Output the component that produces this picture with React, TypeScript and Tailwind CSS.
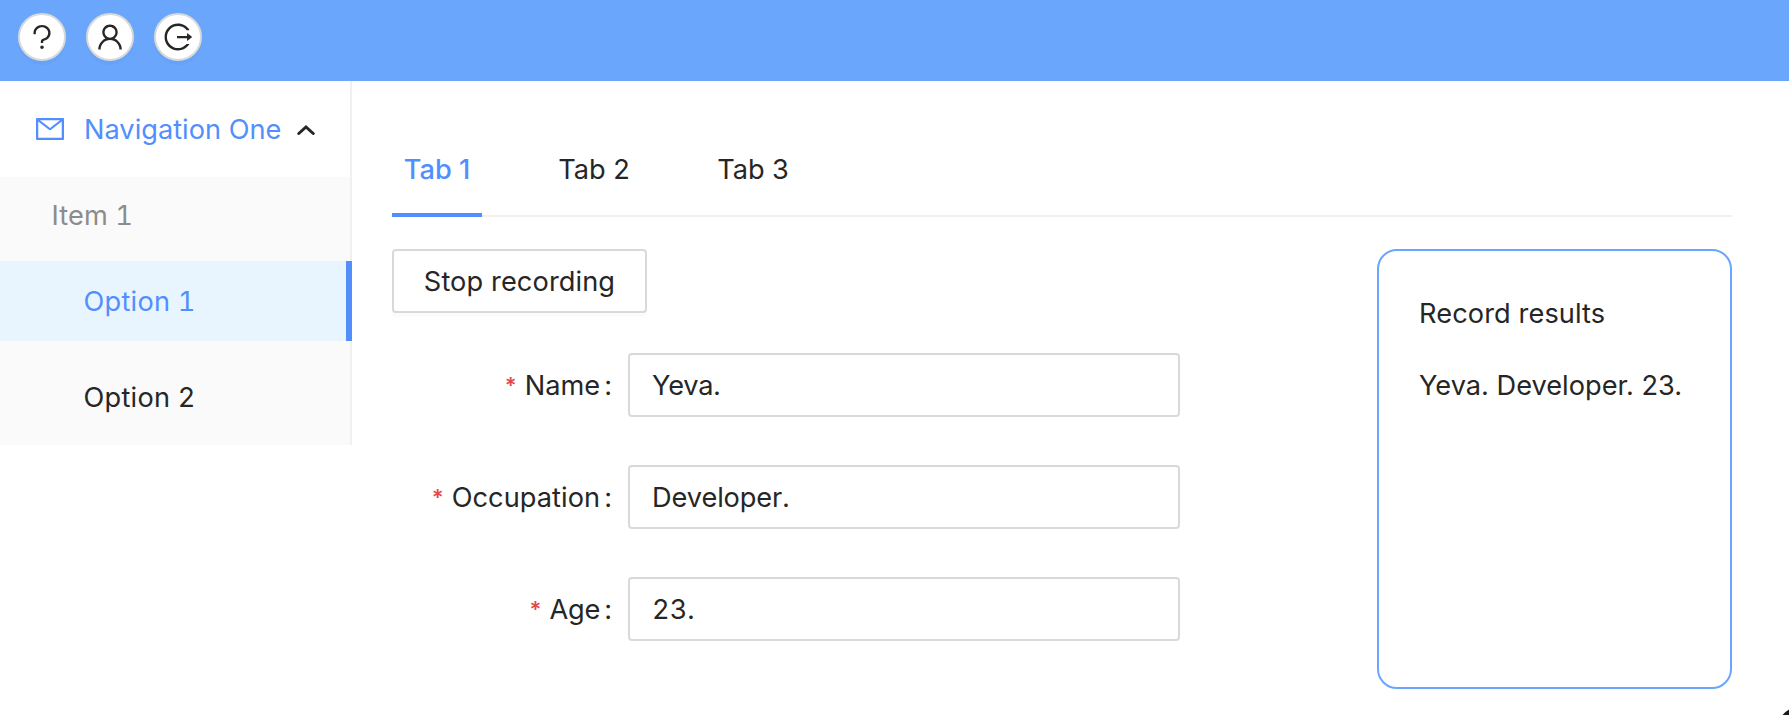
import type { ReactNode } from "react";
import { AiOutlineLogout, AiOutlineMail, AiOutlineQuestion, AiOutlineUser } from "react-icons/ai";

function CircleButton({ label, children }: { label: string; children: ReactNode }) {
  return (
    <button
      aria-label={label}
      className="flex size-12 items-center justify-center rounded-full border-2 border-[#d9d9d9] bg-white text-[32px] text-[#262626] shadow-[0_4px_0_rgba(0,0,0,0.02)]"
    >
      {children}
    </button>
  );
}

function Field({ label, value }: { label: ReactNode; value: ReactNode }) {
  return (
    <div className="flex h-16 items-center">
      <div className="flex w-[236px] shrink-0 items-center justify-end pt-0.5 pr-[15px]">
        <span className="mr-[8px] mb-[3px] text-[22px] leading-8 font-semibold text-[#e0494b]">*</span>
        {label}
        <span className="ml-1 pr-px">:</span>
      </div>
      <div className="flex h-16 w-[552px] items-center rounded-[4px] border-2 border-[#d9d9d9] bg-white px-[22px] pt-0.5 tabular-nums">
        {value}
      </div>
    </div>
  );
}

export default function App() {
  return (
    <div className="relative flex h-[715px] w-[1789px] flex-col overflow-hidden bg-white font-['Inter',sans-serif] text-[27.2px] leading-[44px] text-[#262626]">
      <header className="flex h-[81px] shrink-0 items-start gap-5 bg-[#69a6fc] pt-[13px] pl-[18px]">
        <CircleButton label="Help"><AiOutlineQuestion /></CircleButton>
        <CircleButton label="Profile"><AiOutlineUser /></CircleButton>
        <CircleButton label="Log out"><AiOutlineLogout /></CircleButton>
      </header>
      <div className="flex flex-1 items-start">
        <nav className="w-[352px] shrink-0">
          <div className="flex h-24 items-center border-r-2 border-[#f0f0f0] pt-0.5 pl-[34px] text-[#528ffd]">
            <AiOutlineMail className="mb-0.5 size-8" />
            <span className="ml-[18px]">Navigation One</span>
            <svg className="ml-[16px] h-3 w-[18px] text-[#262626]" viewBox="0 0 18 12" fill="none" stroke="currentColor" strokeWidth="3">
              <path d="M1.8 9.5 9 3l7.200 6.500" strokeLinecap="round" />
            </svg>
          </div>
          <div className="h-[84px] border-r-2 border-[#f0f0f0] bg-[#fafafa] pt-[17px] pl-[51.500px] tracking-[0.1px] tabular-nums text-[#8c8c8c]">Item 1</div>
          <div className="flex h-20 items-center border-r-[6px] border-[#528ffd] bg-[#e8f5ff] pt-0.5 pl-[83.500px] tracking-[0.25px] tabular-nums text-[#528ffd]">Option 1</div>
          <div className="flex h-[104px] items-center border-r-2 border-[#f0f0f0] bg-[#fafafa] pt-2.5 pl-[83.500px] tracking-[0.25px] tabular-nums">Option 2</div>
        </nav>
        <main className="ml-10 w-[1340px] pt-[44px]">
          <div className="flex h-[92px] items-start gap-16 border-b-2 border-[#f0f0f0]">
            <div className="h-[92px] w-[90px] shrink-0 border-b-4 border-[#528ffd] pt-[23px] text-center font-medium text-[#528ffd]">Tab 1</div>
            <div className="w-[96px] pt-[23px] text-center">Tab 2</div>
            <div className="w-[94px] pt-[23px] text-center -tracking-[0.1px]">Tab 3</div>
          </div>
          <div className="mt-8 flex items-start justify-between">
            <section>
              <button className="flex h-16 w-[255px] items-center justify-center rounded-[4px] border-2 border-[#d9d9d9] bg-white pt-0.5 tracking-[0.1px] shadow-[0_4px_0_rgba(0,0,0,0.015)]">
                Stop recording
              </button>
              <div className="mt-10 flex flex-col gap-12">
                <Field label={<span>Name</span>} value={<span className="-tracking-[0.2px]">Yeva.</span>} />
                <Field label={<span className="tracking-[0.05px]">Occupation</span>} value={<span className="-tracking-[0.1px]">Developer.</span>} />
                <Field label={<span className="-tracking-[0.2px]">Age</span>} value={<span>23.</span>} />
              </div>
            </section>
            <aside className="h-[440px] w-[355px] rounded-[20px] border-2 border-[#69a6fc] pt-[41px] pl-10 whitespace-nowrap">
              <p className="tracking-[0.1px]">Record results</p>
              <p className="mt-7">Yeva. Developer. 23.</p>
            </aside>
          </div>
        </main>
      </div>
      <svg className="absolute right-0 bottom-0 size-[7px]" viewBox="0 0 7 7">
        <path d="M7 1.500v5.500H0.500Q3.500 3.500 7 1.500" fill="#1a1a1a" />
      </svg>
    </div>
  );
}
